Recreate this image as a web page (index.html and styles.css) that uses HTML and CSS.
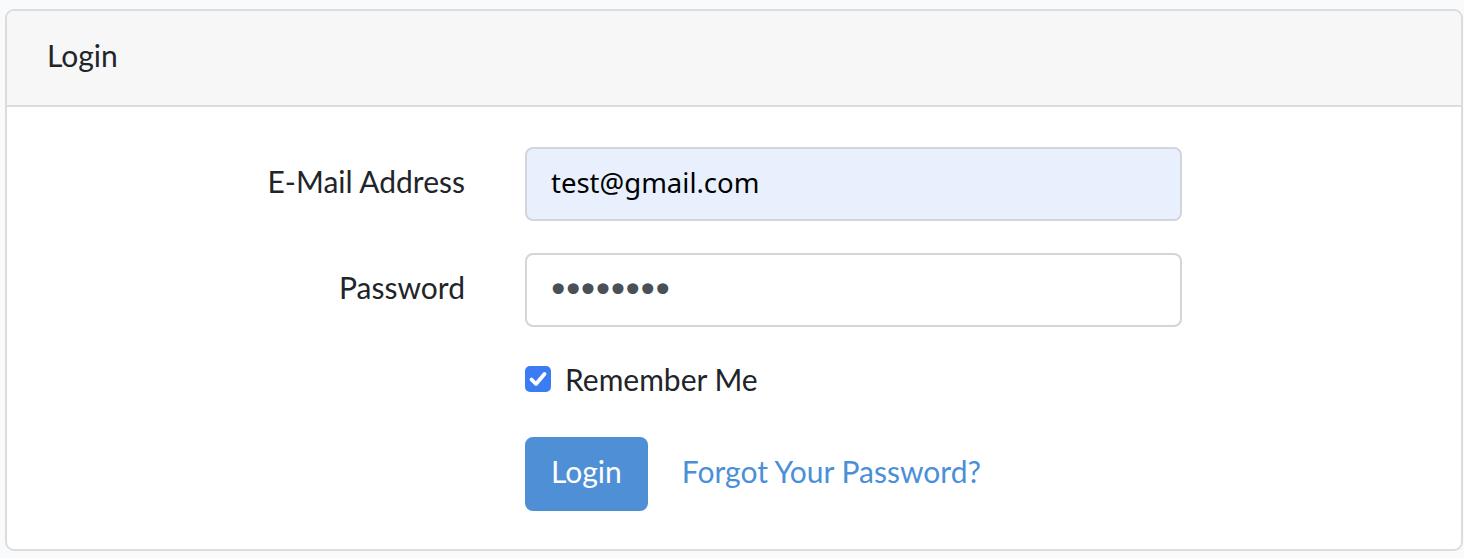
FILE: index.html
```html
<!DOCTYPE html>
<html lang="en">
<head>
<meta charset="utf-8">
<title>Login</title>
<link rel="stylesheet" href="styles.css">
</head>
<body>
<div class="page">
  <div class="card">
    <div class="card-header">Login</div>
    <div class="card-body">
      <form class="login-form" onsubmit="return false">
        <div class="form-row">
          <label class="col-label" for="email">E-Mail Address</label>
          <div class="col-field">
            <input id="email" class="form-control autofilled" type="email" value="test@gmail.com">
          </div>
        </div>
        <div class="form-row">
          <label class="col-label" for="password">Password</label>
          <div class="col-field">
            <input id="password" class="form-control password" type="password" value="secret12">
          </div>
        </div>
        <div class="form-row">
          <div class="col-offset"></div>
          <div class="col-field">
            <label class="form-check">
              <span class="check-box">
                <svg viewBox="0 0 26 26" width="26" height="26"><path d="M6.5 13.5 L11 18 L19.5 8" fill="none" stroke="#fff" stroke-width="3.8" stroke-linecap="round" stroke-linejoin="round"/></svg>
              </span>
              <span class="check-label">Remember Me</span>
            </label>
          </div>
        </div>
        <div class="form-row last">
          <div class="col-offset"></div>
          <div class="col-field actions">
            <button class="btn btn-primary" type="submit">Login</button>
            <a class="btn btn-link" href="#">Forgot Your Password?</a>
          </div>
        </div>
      </form>
    </div>
  </div>
</div>
</body>
</html>
```

FILE: styles.css
```css
* { box-sizing: border-box; }

html, body {
  margin: 0;
  padding: 0;
  background: #f8fafc;
}

body {
  font-family: "Lato", "Noto Sans", sans-serif;
  font-size: 30px;
  line-height: 46px;
  color: #212529;
}

.page {
  padding: 9px 1px 0 5px;
}

.card {
  background: #fff;
  border: 2px solid #dcdcdc;
  border-radius: 9px;
  overflow: hidden;
}

.card-header {
  background: #f7f7f7;
  border-bottom: 2px solid #dcdcdc;
  padding: 21px 40px 27px;
}

.card-body {
  padding: 40px 40px 38px;
}

.form-row {
  display: flex;
  margin: 0 -30px 32px;
}

.form-row.last {
  margin-bottom: 0;
}

.col-label,
.col-offset {
  flex: 0 0 33.3333%;
  padding: 11px 30px 0;
  text-align: right;
}

.col-field {
  flex: 0 0 50%;
  padding: 0 30px;
}

.form-control {
  display: block;
  width: 100%;
  height: 74px;
  padding: 10px 24px 14px;
  font-family: "Lato", "Noto Sans", sans-serif;
  font-size: 30px;
  line-height: 46px;
  color: #495057;
  background: #fff;
  border: 2px solid #d2d6da;
  border-radius: 8px;
  outline: none;
}

.form-control.autofilled {
  background: #e8f0fe;
  color: #000;
  font-family: "Noto Sans", sans-serif;
  font-size: 27.5px;
}

.form-control.password {
  font-family: "DejaVu Sans", sans-serif;
  font-size: 38px;
  letter-spacing: -7.5px;
  padding: 12px 24px 12px 20px;
  color: #495057;
}

.form-check {
  display: flex;
  align-items: center;
  height: 46px;
  padding-bottom: 6px;
  cursor: pointer;
}

.check-box {
  flex: 0 0 26px;
  width: 26px;
  height: 26px;
  border-radius: 5px;
  background: #3b7cf5;
  display: flex;
  margin-right: 14px;
}

.check-box svg {
  display: block;
}

.actions {
  display: flex;
  align-items: center;
}

.btn {
  display: inline-block;
  font-family: "Lato", "Noto Sans", sans-serif;
  font-size: 30px;
  line-height: 46px;
  padding: 9px 24px 15px;
  border: 2px solid transparent;
  border-radius: 8px;
  text-decoration: none;
  cursor: pointer;
}

.btn-primary {
  background: #4f8fd6;
  border-color: #4f8fd6;
  color: #fff;
}

.btn-link {
  background: transparent;
  color: #4a8fd8;
  margin-left: 8px;
}
```
